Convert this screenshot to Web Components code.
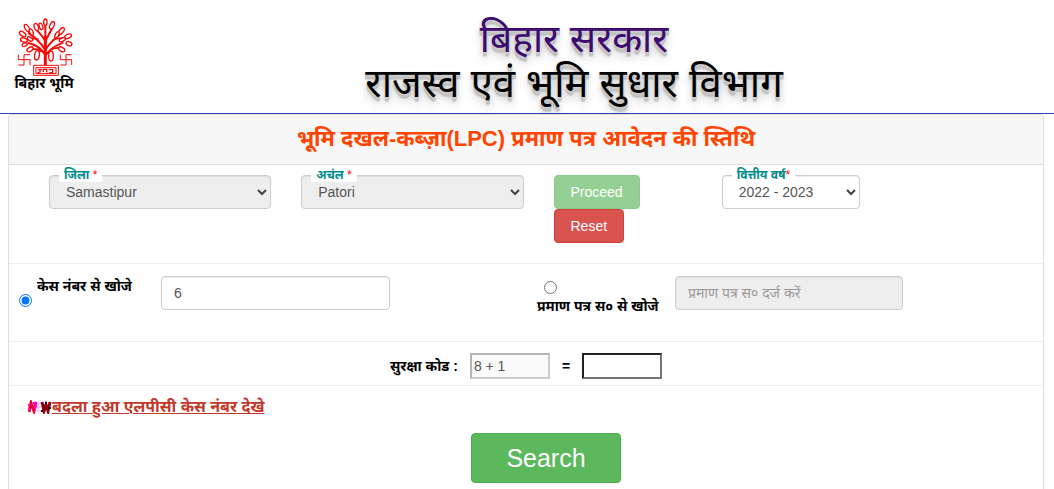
<!DOCTYPE html>
<html lang="hi">
<head>
<meta charset="utf-8">
<title>LPC Status</title>
<style>
  body {
    margin: 0;
    min-height: 100vh;
    display: flex;
    flex-direction: column;
    background: #fff;
    color: #333;
    font: 14px/20px "Liberation Sans", "Noto Sans Devanagari", "Noto Sans", sans-serif;
  }
</style>
</head>
<body>
<site-header>
  <span slot="state">बिहार सरकार</span>
  <span slot="department">राजस्व एवं भूमि सुधार विभाग</span>
</site-header>
<form-panel>
  <span slot="title">भूमि दखल-कब्ज़ा(LPC) प्रमाण पत्र आवेदन की स्तिथि</span>
  <location-row></location-row>
  <search-options></search-options>
  <captcha-row></captcha-row>
  <search-footer></search-footer>
</form-panel>

<script>
// Shared by every element that holds form controls
const controlStyles = `
  *, *::before, *::after { box-sizing: border-box; }
  input, select, button { font: inherit; margin: 0; }
  .control {
    display: block;
    width: 100%;
    height: 34px;
    padding: 6px 12px;
    border: 1px solid #ccc;
    border-radius: 4px;
    background: #fff;
    color: #555;
    box-shadow: inset 0 1px 1px rgba(0, 0, 0, .075);
  }
  .control:disabled { background: #eee; opacity: 1; }
  .control::placeholder { color: #999; opacity: 1; }
`;

class SiteLogo extends HTMLElement {
  constructor() {
    super();
    this.attachShadow({ mode: 'open' });
    this.shadowRoot.innerHTML = `
      <style>
        :host { display: flex; flex-direction: column; align-items: center; color: #000; }
        svg { display: block; width: 60px; height: 60px; }
        span { font-size: 14px; line-height: 14px; font-weight: bold; white-space: nowrap; }
      </style>
      <svg viewBox="42 32 180 180" fill="none" stroke="#f50a0a" stroke-width="4" aria-hidden="true">
        <path stroke-width="9" d="M136 180V92"/>
        <path stroke-width="6" d="M136 150C126 130 108 118 84 112M136 150C150 132 166 120 190 112M135 132C122 112 108 98 84 82M137 132C150 112 164 100 184 84M136 108C128 92 118 82 108 72M136 108C144 92 150 80 156 70M136 96V58"/>
        <path stroke-width="5" d="M122 133Q108 130 92 132M150 133Q164 126 184 128M116 102Q98 98 84 100M158 104Q172 98 190 98M132 140Q116 134 112 142M140 146Q150 138 154 142"/>
        <g fill="#fff">
          <ellipse cx="136" cy="51" rx="5" ry="10"/>
          <ellipse cx="109" cy="65" rx="6" ry="11" transform="rotate(-20 109 65)"/>
          <ellipse cx="123" cy="63" rx="5" ry="10" transform="rotate(-20 123 63)"/>
          <ellipse cx="156" cy="60" rx="6" ry="12" transform="rotate(25 156 60)"/>
          <ellipse cx="81" cy="68" rx="6" ry="12" transform="rotate(-30 81 68)"/>
          <ellipse cx="94" cy="80" rx="5" ry="10" transform="rotate(-25 94 80)"/>
          <ellipse cx="184" cy="77" rx="6" ry="12" transform="rotate(40 184 77)"/>
          <ellipse cx="171" cy="88" rx="5" ry="10" transform="rotate(30 171 88)"/>
          <ellipse cx="68" cy="86" rx="11" ry="6" transform="rotate(35 68 86)"/>
          <ellipse cx="72" cy="104" rx="11" ry="6" transform="rotate(15 72 104)"/>
          <ellipse cx="90" cy="101" rx="9" ry="5" transform="rotate(30 90 101)"/>
          <ellipse cx="204" cy="93" rx="11" ry="6" transform="rotate(-25 204 93)"/>
          <ellipse cx="207" cy="115" rx="9" ry="6" transform="rotate(20 207 115)"/>
          <ellipse cx="187" cy="103" rx="10" ry="5" transform="rotate(-25 187 103)"/>
          <ellipse cx="74" cy="118" rx="8" ry="5" transform="rotate(-20 74 118)"/>
          <ellipse cx="90" cy="132" rx="10" ry="6" transform="rotate(-30 90 132)"/>
          <ellipse cx="185" cy="132" rx="10" ry="6" transform="rotate(30 185 132)"/>
          <ellipse cx="111" cy="150" rx="7" ry="14" transform="rotate(8 111 150)"/>
          <ellipse cx="153" cy="152" rx="7" ry="15"/>
        </g>
        <g stroke-width="3">
          <path d="M55 148V163H90M72 148V179M72 148H90M90 163V179M55 179H72"/>
          <path d="M181 148V163H215M198 148V179M198 148H215M215 163V179M181 179H198"/>
          <path d="M101 180H175V210H101ZM108 187H168V205H108Z"/>
        </g>
        <path d="M114 193H126M120 193V202M130 200V192H140V200M146 193H158V202H148M112 202H118M136 204H144"/>
      </svg>
      <span><slot></slot></span>
    `;
  }
}
customElements.define('site-logo', SiteLogo);

class SiteHeader extends HTMLElement {
  constructor() {
    super();
    this.attachShadow({ mode: 'open' });
    this.shadowRoot.innerHTML = `
      <style>
        :host { display: block; border-bottom: 1px solid #2f45b5; }
        header { display: flex; align-items: flex-start; height: 113px; }
        site-logo { flex: 0 0 60px; padding: 16px 20px 0 14px; }
        h1 {
          flex: 1;
          margin: 0;
          padding-top: 16px;
          text-align: center;
          font-size: 40px;
          line-height: 45px;
          font-weight: 400;
          color: #000;
          text-shadow: 0 1px 0 #ccc, 0 2px 0 #c9c9c9, 0 3px 0 #c4c4c4, 0 4px 0 #c0c0c0,
            0 5px 1px rgba(0, 0, 0, .1), 0 3px 5px rgba(0, 0, 0, .2), 0 8px 10px rgba(0, 0, 0, .2);
        }
        .state { display: block; color: #3c0a70; font-size: 39px; }
        .department { display: block; }
      </style>
      <header>
        <site-logo>बिहार भूमि</site-logo>
        <h1>
          <span class="state"><slot name="state"></slot></span>
          <span class="department"><slot name="department"></slot></span>
        </h1>
      </header>
    `;
  }
}
customElements.define('site-header', SiteHeader);

class FormPanel extends HTMLElement {
  constructor() {
    super();
    this.attachShadow({ mode: 'open' });
    this.shadowRoot.innerHTML = `
      <style>
        :host {
          display: block;
          flex: 1;
          margin: 0 10px 0 8px;
          border: 1px solid #ddd;
          border-bottom: 0;
          border-radius: 4px 4px 0 0;
        }
        h2 {
          margin: 0;
          padding: 9px 15px 11px;
          border-bottom: 1px solid #ddd;
          border-radius: 3px 3px 0 0;
          background: #f7f7f7;
          color: #ff4500;
          font-size: 22px;
          line-height: 29px;
          font-weight: bold;
          text-align: center;
        }
      </style>
      <h2><slot name="title"></slot></h2>
      <slot></slot>
    `;
  }
}
customElements.define('form-panel', FormPanel);

// Drop-down with its label sitting on the top border
class FloatSelect extends HTMLElement {
  connectedCallback() {
    if (this.shadowRoot) return;
    this.attachShadow({ mode: 'open' });
    this.shadowRoot.innerHTML = `
      <style>
        ${controlStyles}
        :host { display: block; position: relative; }
        label {
          position: absolute;
          top: -7px;
          left: 10px;
          padding: 0 5px;
          background: #fff;
          color: #008b8b;
          font-size: 12px;
          line-height: 14px;
          font-weight: bold;
        }
        i { color: #f00; font-style: normal; font-weight: normal; }
        .box { position: relative; }
        select.control { appearance: none; padding-left: 16px; }
        svg { position: absolute; right: 4px; top: 13px; width: 10px; height: 8px; pointer-events: none; }
      </style>
      <div class="box">
        <select id="field" class="control"><option>${this.getAttribute('value')}</option></select>
        <svg viewBox="0 0 10 8" fill="none" stroke="#444" stroke-width="2" aria-hidden="true"><path d="M1 2l4 4 4-4"/></svg>
      </div>
      <label for="field"><slot></slot><i>*</i></label>
    `;
    this.shadowRoot.getElementById('field').disabled = this.hasAttribute('disabled');
  }
}
customElements.define('float-select', FloatSelect);

class LocationRow extends HTMLElement {
  constructor() {
    super();
    this.attachShadow({ mode: 'open' });
    this.shadowRoot.innerHTML = `
      <style>
        ${controlStyles}
        :host {
          display: grid;
          grid-template-columns: 3fr 3fr 2fr 2fr 2fr;
          padding: 10px 0 20px 25px;
          border-bottom: 1px solid #eee;
        }
        float-select, .actions { margin: 0 15px; }
        .actions { display: flex; flex-direction: column; align-items: flex-start; }
        button {
          height: 34px;
          padding: 6px 16px;
          border: 1px solid #4cae4c;
          border-radius: 4px;
          background: #5cb85c;
          color: #fff;
        }
        button:disabled { opacity: .65; }
        .reset { background: #d9534f; border-color: #d43f3a; }
      </style>
      <float-select value="Samastipur" disabled>जिला </float-select>
      <float-select value="Patori" disabled>अचंल </float-select>
      <div class="actions">
        <button type="button" disabled>Proceed</button>
        <button type="button" class="reset">Reset</button>
      </div>
      <float-select value="2022 - 2023">वित्तीय वर्ष</float-select>
    `;
  }
}
customElements.define('location-row', LocationRow);

class SearchOptions extends HTMLElement {
  constructor() {
    super();
    this.attachShadow({ mode: 'open' });
    this.shadowRoot.innerHTML = `
      <style>
        ${controlStyles}
        :host {
          display: grid;
          grid-template-columns: 152fr 229fr 147fr 138fr 228fr 140fr;
          align-items: start;
          padding: 12px 0 25px;
          border-bottom: 1px solid #eee;
        }
        .option { color: #000; font-weight: bold; white-space: nowrap; }
        .case { display: flex; align-items: flex-end; gap: 5px; padding-left: 10px; }
        .case label { padding-bottom: 11px; }
        .certificate { grid-column: 4; display: flex; flex-direction: column; gap: 2px; padding-top: 5px; }
        .option input { width: 13px; height: 13px; }
        .certificate input { margin-left: 7px; }
      </style>
      <div class="option case">
        <input type="radio" name="mode" id="by-case" checked>
        <label for="by-case">केस नंबर से खोजे</label>
      </div>
      <input class="control" type="text" value="6" aria-label="केस नंबर">
      <div class="option certificate">
        <input type="radio" name="mode" id="by-certificate">
        <label for="by-certificate">प्रमाण पत्र स० से खोजे</label>
      </div>
      <input class="control" type="text" placeholder="प्रमाण पत्र स० दर्ज करें" aria-label="प्रमाण पत्र स०" disabled>
    `;
  }
}
customElements.define('search-options', SearchOptions);

class CaptchaRow extends HTMLElement {
  constructor() {
    super();
    this.attachShadow({ mode: 'open' });
    this.shadowRoot.innerHTML = `
      <style>
        ${controlStyles}
        :host {
          display: flex;
          align-items: center;
          justify-content: center;
          gap: 12px;
          padding: 11px 0 6px;
          border-bottom: 1px solid #eee;
          color: #000;
          font-weight: bold;
        }
        input { width: 80px; height: 26px; padding: 1px 2px; border: 2px solid; font-weight: normal; }
        input:disabled { border-color: #b4b4b4 #ccc #ccc #b4b4b4; background: #fafafa; color: #555; }
        .answer { border-color: #222 #767676 #767676 #222; background: #fff; }
      </style>
      <label for="answer">सुरक्षा कोड :</label>
      <input type="text" value="8 + 1" aria-label="सुरक्षा कोड" disabled>
      <span>=</span>
      <input id="answer" class="answer" type="text">
    `;
  }
}
customElements.define('captcha-row', CaptchaRow);

class SearchFooter extends HTMLElement {
  constructor() {
    super();
    this.attachShadow({ mode: 'open' });
    this.shadowRoot.innerHTML = `
      <style>
        ${controlStyles}
        :host { display: flex; flex-direction: column; gap: 16px; padding: 11px 0 5px; }
        a {
          display: flex;
          align-items: center;
          align-self: flex-start;
          margin-left: 19px;
          color: #c0392b;
          font-size: 16px;
          font-weight: bold;
          text-decoration: none;
        }
        a span { text-decoration: underline; }
        svg { width: 24px; height: 14px; }
        .action { display: flex; justify-content: center; padding-left: 40px; }
        button {
          width: 150px;
          height: 50px;
          border: 1px solid #4cae4c;
          border-radius: 4px;
          background: #5cb85c;
          color: #fff;
          font-size: 25px;
          line-height: 32px;
        }
      </style>
      <a href="#">
        <svg viewBox="0 0 24 14" fill="none" aria-hidden="true">
          <path d="M1 12L3 3L6 11L8 2" stroke="#e8002c" stroke-width="3"/>
          <path d="M0 5h2M0 9h2M5 3h2M7 9L9 2" stroke="#f0f" stroke-width="2"/>
          <path d="M9 3h5M9 7h4M9 11h5M10 3v8" stroke="#fbc8fb" stroke-width="2"/>
          <path d="M14 2L16 11L18 5L20 11L22 2M14 6h3" stroke="#8a0010" stroke-width="3"/>
          <path d="M13 11h2M17 3h2M20 8h3" stroke="#300" stroke-width="2"/>
        </svg><span>बदला हुआ एलपीसी केस नंबर देखे</span>
      </a>
      <div class="action"><button type="button">Search</button></div>
    `;
  }
}
customElements.define('search-footer', SearchFooter);
</script>
</body>
</html>
